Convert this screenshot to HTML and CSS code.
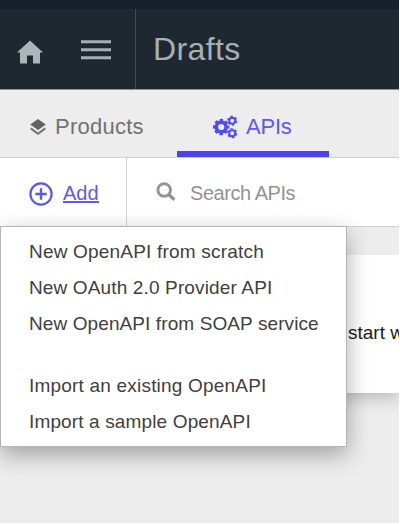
FILE: index.html
```html
<!DOCTYPE html>
<html lang="en">
<head>
<meta charset="utf-8">
<title>Drafts</title>
<link rel="stylesheet" href="styles.css">
</head>
<body>
<div class="app">
  <header class="header">
    <nav class="header-nav">
      <svg class="home" width="26" height="24" viewBox="0 0 26 24"><path d="M13 .4 26 12.6h-3V23.5h-7V15.500h-6v8H3V12.600H0z" fill="#aeb5b8"/></svg>
      <svg class="burger" width="30" height="21" viewBox="0 0 30 21"><path d="M0 1.700h30M0 9.700h30M0 17.800h30" stroke="#a7afb3" stroke-width="3"/></svg>
    </nav>
    <h1 class="title">Drafts</h1>
  </header>
  <nav class="tabs">
    <a class="tab tab-products">
      <svg width="16" height="17" viewBox="0 0 16 17"><path d="M8 0 15.800 5.500 8 11 .2 5.500z" fill="#5f6364"/><path d="m.7 9.300 7.300 5.500 7.300-5.500" fill="none" stroke="#707475" stroke-width="2.100"/></svg>
      <span>Products</span>
    </a>
    <a class="tab tab-apis">
      <svg width="25" height="24" viewBox="0 0 25 24" fill="none" stroke="#504bfa">
        <circle cx="8.200" cy="12" r="4.900" stroke-width="3.600"/>
        <circle cx="8.200" cy="12" r="7.100" stroke-width="2.200" stroke-dasharray="3.200 2.376" stroke-dashoffset="1.600"/>
        <circle cx="19.200" cy="5.700" r="3" stroke-width="2"/>
        <circle cx="19.200" cy="5.700" r="4.400" stroke-width="1.400" stroke-dasharray="2.400 2.208"/>
        <circle cx="19.200" cy="18.200" r="3" stroke-width="2"/>
        <circle cx="19.200" cy="18.200" r="4.400" stroke-width="1.400" stroke-dasharray="2.400 2.208"/>
      </svg>
      <span>APIs</span>
    </a>
  </nav>
  <div class="toolbar">
    <div class="add">
      <svg width="24" height="24" viewBox="0 0 24 24" fill="none" stroke="#5a55fa" stroke-width="2.200"><circle cx="12" cy="12" r="10.600"/><path d="M12 6.300v11.400M6.300 12h11.400" stroke-width="2.400"/></svg>
      <span class="add-label">Add</span>
      <div class="menu">
        <div class="item scratch">New OpenAPI from scratch</div>
        <div class="item oauth">New OAuth 2.0 Provider API</div>
        <div class="item soap">New OpenAPI from SOAP service</div>
        <div class="item existing">Import an existing OpenAPI</div>
        <div class="item sample">Import a sample OpenAPI</div>
      </div>
    </div>
    <div class="search">
      <svg width="20" height="20" viewBox="0 0 20 20" fill="none" stroke="#949494"><circle cx="8.200" cy="8" r="6.300" stroke-width="2.900"/><path d="m12.700 12.500 5.700 5.300" stroke-width="3.300"/></svg>
      <span>Search APIs</span>
    </div>
  </div>
  <main class="content">
    <section class="card"><p>start w</p></section>
  </main>
</div>
</body>
</html>
```
FILE: styles.css
```css
* { box-sizing: border-box; }
body {
  margin: 0;
  background: #fff;
  font-family: "Liberation Sans", Arial, sans-serif;
  overflow: hidden;
}
svg { display: block; flex: none; }
span, .item { white-space: nowrap; }
.app {
  width: 399px;
  height: 523px;
  overflow: hidden;
  background: #ededed;
}
.header {
  display: flex;
  height: 90px;
  border-top: 9px solid #14202b;
  border-bottom: 1px solid #8b9295;
  background: #1d2830;
}
.header-nav {
  display: flex;
  width: 136px;
  padding: 31px 0 0 17px;
  border-right: 1px solid #414c53;
}
.burger { margin-left: 38px; }
.title {
  margin: 0;
  padding: 22px 0 0 17px;
  color: #a9b0b4;
  font-size: 32px;
  font-weight: 400;
  line-height: 37px;
  letter-spacing: .4px;
}
.tabs {
  display: flex;
  height: 68px;
  border-bottom: 1px solid #d2d2d2;
}
.tab {
  display: flex;
  align-items: center;
  font-size: 22px;
}
.tab-products {
  width: 177px;
  padding: 7px 0 0 30px;
  color: #70736f;
}
.tab-products span { margin-left: 9px; letter-spacing: .25px; }
.tab-apis {
  width: 152px;
  padding: 12px 0 0 36px;
  border-bottom: 6px solid #4b42f6;
  color: #5c58fa;
}
.tab-apis span { margin-left: 8px; letter-spacing: -.2px; }
.toolbar {
  display: flex;
  height: 69px;
  border-bottom: 1px solid #d0d0d0;
  background: #fff;
}
.add {
  position: relative;
  display: flex;
  width: 127px;
  padding: 24px 0 0 29px;
  border-right: 1px solid #d2d2d2;
}
.add-label {
  height: 21px;
  margin-left: 10px;
  border-bottom: 2px solid #5c58fa;
  color: #5c58fa;
  font-size: 20px;
  line-height: 22px;
}
.menu {
  position: absolute;
  z-index: 1;
  top: 68px;
  left: 0;
  width: 347px;
  height: 221px;
  padding: 7px 0 0 28px;
  border: 1px solid #b4b4b4;
  background: #fff;
  box-shadow: 0 8px 22px rgba(0, 0, 0, .32);
}
.item {
  height: 36px;
  color: #404040;
  font-size: 19px;
  line-height: 36px;
  letter-spacing: .2px;
}
.oauth, .sample { letter-spacing: .14px; }
.soap { letter-spacing: .1px; }
.existing { margin-top: 26px; }
.search {
  display: flex;
  padding: 24px 0 0 29px;
  color: #939393;
  font-size: 20px;
  line-height: 22px;
}
.search span { margin-left: 14px; letter-spacing: -.45px; }
.content { padding-top: 28px; }
.card {
  height: 138px;
  margin-left: 30px;
  padding: 66px 0 0 318px;
  background: #fff;
  box-shadow: 0 5px 16px rgba(0, 0, 0, .22);
  clip-path: inset(0 0 -30px -30px);
}
.card p {
  margin: 0;
  color: #1c1c1c;
  font-size: 19px;
  line-height: 24px;
  white-space: nowrap;
}
```
